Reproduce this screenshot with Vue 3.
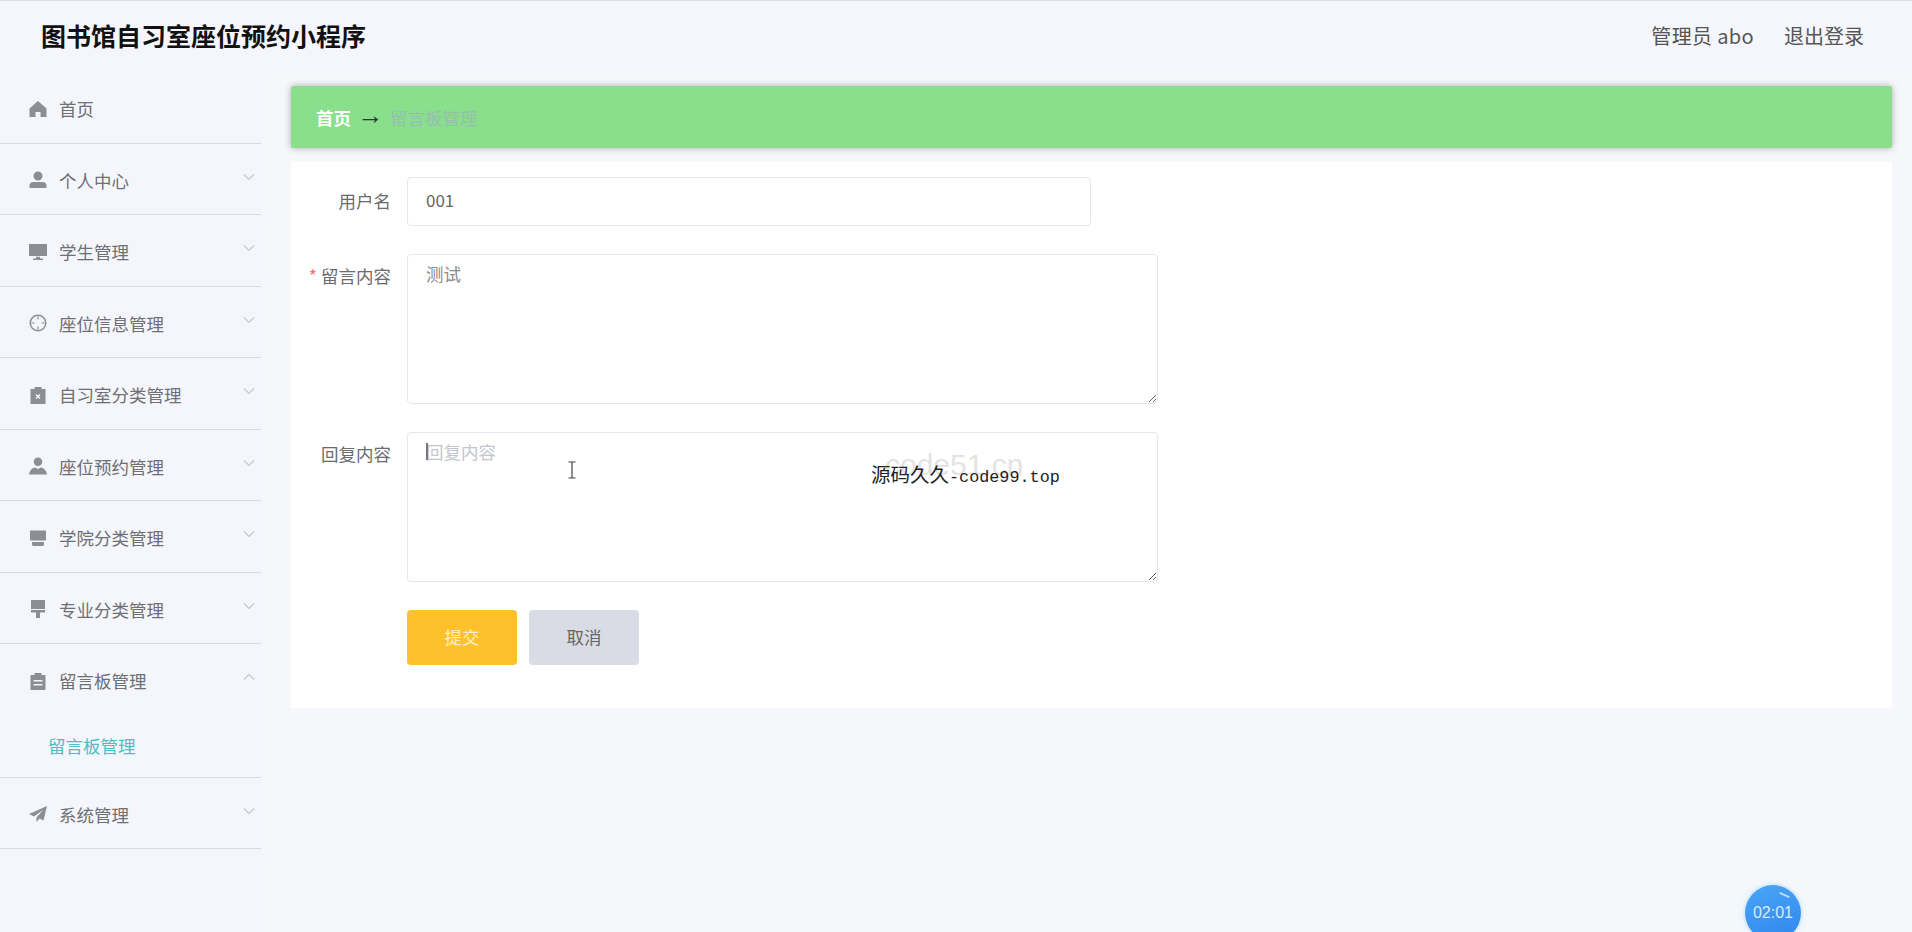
<template>
  <div class="page">
    <header class="top">
      <h1 class="title">图书馆自习室座位预约小程序</h1>
      <div class="top-right">
        <span class="who">管理员 abo</span>
        <span>退出登录</span>
      </div>
    </header>

    <div class="body">
      <!-- Sidebar -->
      <aside class="side">
        <div v-for="item in menu" :key="item.label" class="menu-group">
          <div class="menu-item">
            <svg class="menu-icon" width="18" height="18" viewBox="0 0 18 18"><path :d="item.icon" fill="currentColor" fill-rule="evenodd"/></svg>
            <span class="menu-label">{{ item.label }}</span>
            <svg v-if="item.arrow" class="menu-arrow" :class="{ up: item.sub }" width="12" height="8" viewBox="0 0 12 8" fill="none" stroke="currentColor" stroke-width="1.2"><polyline points="1 1.5 6 6.5 11 1.5"/></svg>
          </div>
          <div v-if="item.sub" class="menu-sub">{{ item.sub }}</div>
        </div>
      </aside>

      <!-- Main -->
      <main class="main">
        <div class="crumbs">
          <span class="crumb-home">首页</span>
          <span class="crumb-arrow">→</span>
          <span class="crumb-now">留言板管理</span>
        </div>

        <form class="card" @submit.prevent>
          <div class="row">
            <label class="label">用户名</label>
            <input class="field" type="text" value="001" />
          </div>
          <div class="row">
            <label class="label label-area"><i class="star">*</i>留言内容</label>
            <textarea class="area area-filled" placeholder="留言内容">测试</textarea>
          </div>
          <div class="row">
            <label class="label label-area">回复内容</label>
            <div class="area-wrap">
              <textarea class="area" placeholder="回复内容"></textarea>
              <span class="caret"></span>
            </div>
          </div>
          <div class="row actions">
            <button class="btn btn-ok" type="button">提交</button>
            <button class="btn btn-no" type="button">取消</button>
          </div>
        </form>
      </main>
    </div>

    <!-- Screen recording overlays -->
    <svg class="ibeam" width="10" height="18" viewBox="0 0 10 18" fill="none" stroke="#444" stroke-width="1.2"><path d="M1.5 1h7M5 1v16M1.5 17h7"/></svg>
    <span class="mark-back">code51.cn</span>
    <span class="mark-front"><span class="mark-cjk">源码久久</span>-code99.top</span>
    <div class="timer">
      <span class="timer-shine"></span>
      02:01
    </div>
  </div>
</template>

<script setup>
const clip = 'M1.5 3h4V1h7v2h4v15h-15Z'

const menu = [
  { label: '首页', icon: 'M9 1l8.500 7.500V17h-6v-5h-5v5h-6V8.500Z' },
  { label: '个人中心', arrow: true, icon: 'M9 .5a4.500 4.500 0 1 1 0 9a4.500 4.500 0 0 1 0-9ZM.5 14.500c0-2.500 2-3.500 4-3.500h9c2 0 4 1 4 3.500V17H.5Z' },
  { label: '学生管理', arrow: true, icon: 'M0 1h18v12H0ZM7 13.800h4v1.700h3V17H4v-1.500h3Z' },
  { label: '座位信息管理', arrow: true, icon: 'M9 .5a8.500 8.500 0 1 0 0 17a8.500 8.500 0 0 0 0-17Zm0 1.500a7 7 0 1 1 0 14a7 7 0 0 1 0-14ZM8.400 2.500h1.200v3H8.400ZM8.400 12.500h1.200v3H8.400ZM2.500 8.400h3v1.200h-3ZM12.500 8.400h3v1.200h-3Z' },
  { label: '自习室分类管理', arrow: true, icon: clip + 'M6.500 9l1-1L9 9.500 10.500 8l1 1L10 10.500l1.500 1.500-1 1L9 11.500 7.500 13l-1-1L8 10.500Z' },
  { label: '座位预约管理', arrow: true, icon: 'M9 .5a4.300 4.300 0 1 1 0 8.600a4.300 4.300 0 0 1 0-8.600ZM0 17.500c.5-4 3-6.500 6-7l3 1.500 3-1.500c3 .5 5.500 3 6 7Z' },
  { label: '学院分类管理', arrow: true, icon: 'M1 1.500h16v9c0 .5-.5 1-1 1H2c-.5 0-1-.5-1-1ZM3 13h12v2.500c0 .7-.5 1.500-1.500 1.500h-9C3.500 17 3 16.200 3 15.500Z' },
  { label: '专业分类管理', arrow: true, icon: 'M2 0h14v9H2ZM2 10h14v2.500h-5V18H7v-5.500H2Z' },
  { label: '留言板管理', arrow: true, sub: '留言板管理', icon: clip + 'M4.500 8h9v1.500h-9ZM4.500 12h9v1.500h-9Z' },
  { label: '系统管理', arrow: true, icon: 'M18 1L0 9l5 2.500L14 5l-6.500 7.500V17l3-3.500 4 2Z' },
]
</script>

<style>
html, body { margin: 0; background: #f5f7fa; }
</style>

<style scoped>
.page {
  position: relative;
  display: flex;
  flex-direction: column;
  height: 932px;
  overflow: hidden;
  background: #f5f7fa;
  font-family: "Noto Sans CJK SC", "Liberation Sans", sans-serif;
  color: #666;
}

/* ── Header ── */
.top {
  display: flex;
  align-items: center;
  justify-content: space-between;
  box-sizing: border-box;
  height: 72px;
  padding: 0 48px 3px 41px;
  background: #f4f6fb;
  border-top: 1px solid #dcdfe4;
}
.title {
  margin: 0 0 1px;
  font-size: 25px;
  font-weight: 700;
  color: #111;
}
.top-right {
  display: flex;
  gap: 30px;
  font-size: 20px;
  color: #555;
}
.who { letter-spacing: 0.35px; }

.body {
  display: flex;
  flex: 1;
  min-height: 0;
}

/* ── Sidebar ── */
.side {
  flex: none;
  width: 261px;
  background: #f4f6fb;
}
.menu-group {
  border-bottom: 1px solid #d9dce1;
  box-sizing: border-box;
}
.menu-item {
  display: flex;
  align-items: center;
  box-sizing: border-box;
  height: 70.500px;
  padding: 3px 6px 0 29px;
  font-size: 17.500px;
  color: #6e7075;
}
.menu-icon {
  flex: none;
  margin-right: 12px;
  color: #8b8e95;
}
.menu-label { flex: 1; }
.menu-arrow {
  flex: none;
  margin-top: -7px;
  color: #c4c8cf;
}
.menu-arrow.up { transform: rotate(180deg); }
.menu-sub {
  box-sizing: border-box;
  height: 62px;
  padding: 18px 0 0 48px;
  font-size: 17.500px;
  color: #4ebfc0;
}

/* ── Main ── */
.main {
  flex: 1;
  min-width: 0;
  padding: 14px 20px 0 30px;
}
.crumbs {
  display: flex;
  align-items: center;
  gap: 9px;
  box-sizing: border-box;
  height: 62px;
  padding: 0 25px;
  border-radius: 2px;
  background: #89df8c;
  box-shadow: 0 0 7px rgba(0, 0, 0, 0.3);
  font-size: 17.500px;
}
.crumb-home { color: #fff; font-weight: 700; }
.crumb-arrow {
  margin: -5px -2.500px 0;
  font-family: "Liberation Sans", sans-serif;
  font-size: 26px;
  line-height: 1;
  color: #333;
}
.crumb-now { color: #95bfae; }

.card {
  margin-top: 14px;
  padding: 15px 0 43px;
  background: #fff;
}
.row {
  display: flex;
  gap: 16px;
  margin-bottom: 28px;
}
.label {
  flex: none;
  width: 100px;
  box-sizing: border-box;
  text-align: right;
  font-size: 17.500px;
  line-height: 47px;
  color: #6a6c70;
}
.label-area { line-height: 43px; }
.star {
  margin-right: 4px;
  font-style: normal;
  color: #f56c6c;
}
.field,
.area {
  display: block;
  box-sizing: border-box;
  border: 1.5px solid #e4e7ed;
  border-radius: 4px;
  background: #fff;
  font-family: inherit;
  outline: none;
}
.field {
  width: 684px;
  height: 49px;
  padding: 0 18px 4px;
  font-size: 17px;
  color: #666;
}
.area-wrap { position: relative; }
.area {
  width: 751px;
  height: 150px;
  padding: 6px 18px;
  font-size: 17.500px;
  line-height: 26px;
  color: #8c8c8c;
}
.area::placeholder { color: #c3c6cc; }
.caret {
  position: absolute;
  left: 19px;
  top: 11px;
  width: 1.500px;
  height: 17px;
  background: #777;
}
.actions {
  gap: 12px;
  margin: 0;
  padding-left: 116px;
}
.btn {
  width: 110px;
  height: 55px;
  padding: 0 0 2px;
  border: none;
  border-radius: 4px;
  font-family: inherit;
  font-size: 17.500px;
}
.btn-ok { background: #ffc12b; color: #fdf0c4; }
.btn-no { background: #d9dce4; color: #666; }

/* ── Overlays ── */
.ibeam {
  position: absolute;
  left: 567px;
  top: 461px;
}
.mark-back {
  position: absolute;
  left: 885px;
  top: 441px;
  font-family: "Liberation Sans", sans-serif;
  font-size: 30px;
  line-height: 48px;
  color: #e3e3e3;
}
.mark-front {
  position: absolute;
  left: 871px;
  top: 460px;
  font-family: "Liberation Mono", monospace;
  font-size: 16.800px;
  line-height: 28px;
  white-space: nowrap;
  color: #222;
}
.mark-cjk {
  font-family: "Noto Sans CJK SC", sans-serif;
  font-size: 19.500px;
}
.timer {
  position: absolute;
  left: 1745px;
  top: 885px;
  display: flex;
  align-items: center;
  justify-content: center;
  box-sizing: border-box;
  width: 56px;
  height: 56px;
  border-radius: 50%;
  background: linear-gradient(160deg, #4aa6f5, #2f86ee);
  box-shadow: 0 0 0 2px #d8edff, 0 0 6px 2px #e4f1fb;
  font-family: "Liberation Sans", sans-serif;
  font-size: 16px;
  color: #d8ecff;
}
.timer-shine {
  position: absolute;
  right: 11px;
  top: 9px;
  width: 11px;
  height: 2px;
  border-radius: 2px;
  background: #b9dcfb;
  transform: rotate(25deg);
}
</style>
